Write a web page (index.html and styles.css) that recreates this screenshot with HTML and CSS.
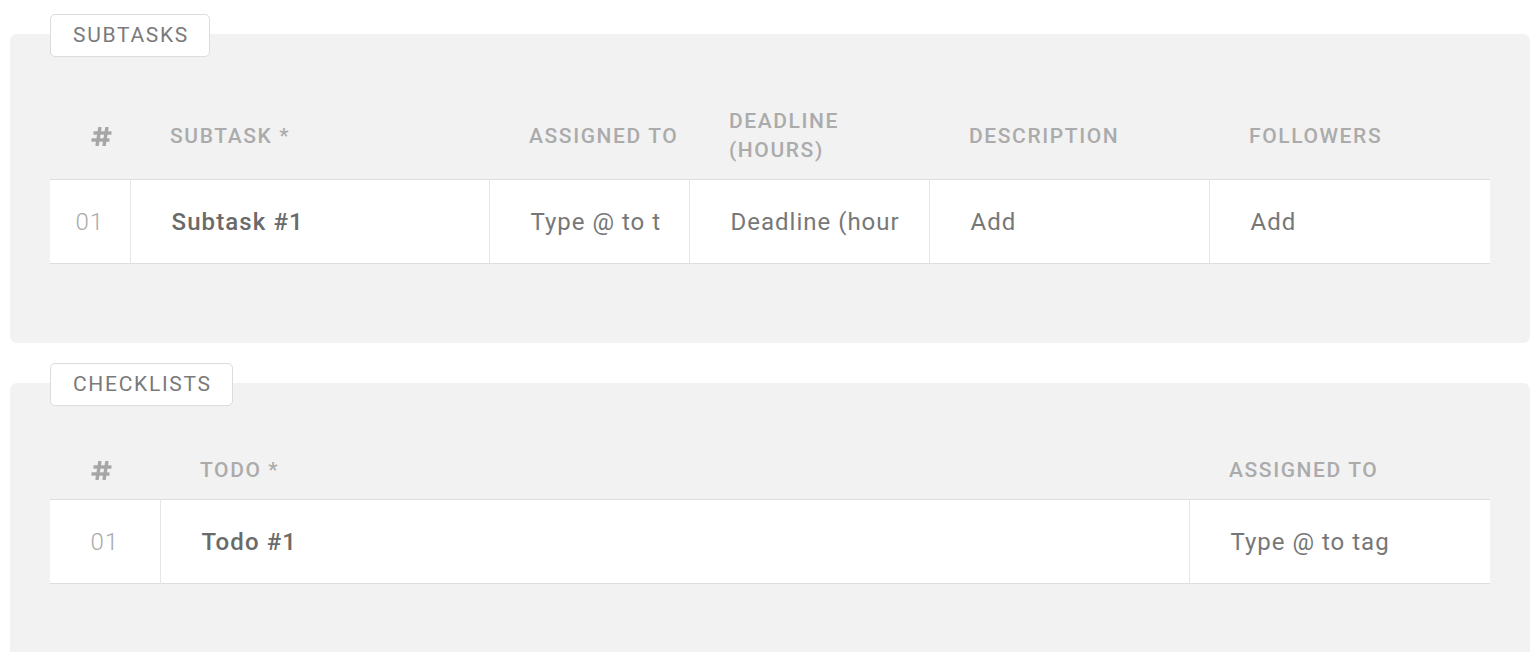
FILE: index.html
```html
<!DOCTYPE html>
<html>
<head>
<meta charset="utf-8">
<link rel="stylesheet" href="styles.css">
</head>
<body>
  <section class="group">
    <div class="tag">SUBTASKS</div>
    <div class="panel">
      <table class="grid">
        <colgroup>
          <col style="width:80px"><col style="width:359px"><col style="width:200px"><col style="width:240px"><col style="width:280px"><col>
        </colgroup>
        <thead>
          <tr>
            <th class="hash"><svg width="21" height="19" viewBox="0 0 21 19"><g stroke="#a6a6a6" stroke-width="3.4" fill="none"><line x1="9" y1="0" x2="6" y2="19"/><line x1="16" y1="0" x2="13" y2="19"/><line x1="2.5" y1="6" x2="20.5" y2="6"/><line x1="0.5" y1="13" x2="18.5" y2="13"/></g></svg></th>
            <th>SUBTASK *</th>
            <th>ASSIGNED TO</th>
            <th>DEADLINE<br>(HOURS)</th>
            <th>DESCRIPTION</th>
            <th>FOLLOWERS</th>
          </tr>
        </thead>
        <tbody>
          <tr>
            <td class="num">01</td>
            <td class="name">Subtask #1</td>
            <td>Type @ to t</td>
            <td>Deadline (hour</td>
            <td>Add</td>
            <td>Add</td>
          </tr>
        </tbody>
      </table>
    </div>
  </section>

  <section class="group">
    <div class="tag">CHECKLISTS</div>
    <div class="panel">
      <table class="grid">
        <colgroup>
          <col style="width:110px"><col style="width:1029px"><col>
        </colgroup>
        <thead>
          <tr>
            <th class="hash"><svg width="21" height="19" viewBox="0 0 21 19"><g stroke="#a6a6a6" stroke-width="3.4" fill="none"><line x1="9" y1="0" x2="6" y2="19"/><line x1="16" y1="0" x2="13" y2="19"/><line x1="2.5" y1="6" x2="20.5" y2="6"/><line x1="0.5" y1="13" x2="18.5" y2="13"/></g></svg></th>
            <th>TODO *</th>
            <th>ASSIGNED TO</th>
          </tr>
        </thead>
        <tbody>
          <tr>
            <td class="num">01</td>
            <td class="name">Todo #1</td>
            <td>Type @ to tag</td>
          </tr>
        </tbody>
      </table>
    </div>
  </section>
</body>
</html>
```

FILE: styles.css
```css
html, body {
  margin: 0;
  padding: 0;
  background: #ffffff;
}
body {
  padding: 14px 10px 0 10px;
  font-family: Roboto, "Liberation Sans", sans-serif;
  color: #777;
}
.group {
  display: flex;
  flex-direction: column;
  align-items: flex-start;
  margin-bottom: 20px;
}
.tag {
  position: relative;
  z-index: 1;
  margin-left: 40px;
  height: 41px;
  padding: 0 20px 0 22px;
  border: 1px solid #dcdcdc;
  border-radius: 5px;
  background: #fff;
  font-size: 21px;
  letter-spacing: 1.7px;
  line-height: 41px;
  color: #7a7a7a;
}
.panel {
  align-self: stretch;
  margin-top: -23px;
  background: #f2f2f2;
  border-radius: 7px;
  padding: 58px 40px 79px 40px;
}
.grid {
  width: 100%;
  table-layout: fixed;
  border-collapse: collapse;
}
.grid th {
  text-align: left;
  font-weight: 500;
  font-size: 21px;
  letter-spacing: 1.6px;
  line-height: 29px;
  color: #ababab;
  padding: 15px 0 14px 40px;
  vertical-align: middle;
}
.grid th.hash {
  padding-left: 41px;
  line-height: 0;
}
.grid th.hash svg {
  display: inline-block;
  vertical-align: middle;
}
.grid tbody tr {
  background: #fff;
  border-top: 1px solid #dedede;
  border-bottom: 1px solid #dedede;
}
.grid td {
  height: 83px;
  padding: 0 0 0 41px;
  font-size: 24px;
  letter-spacing: 1px;
  color: #777;
  white-space: nowrap;
  overflow: hidden;
  border-left: 1px solid #e6e6e6;
}
.grid td:first-child {
  border-left: none;
}
.grid td.num {
  padding: 0;
  text-align: center;
  color: #aaa;
  font-weight: 300;
}
.grid td.name {
  font-weight: 500;
  letter-spacing: 1.1px;
  color: #6a6a6a;
}
```
